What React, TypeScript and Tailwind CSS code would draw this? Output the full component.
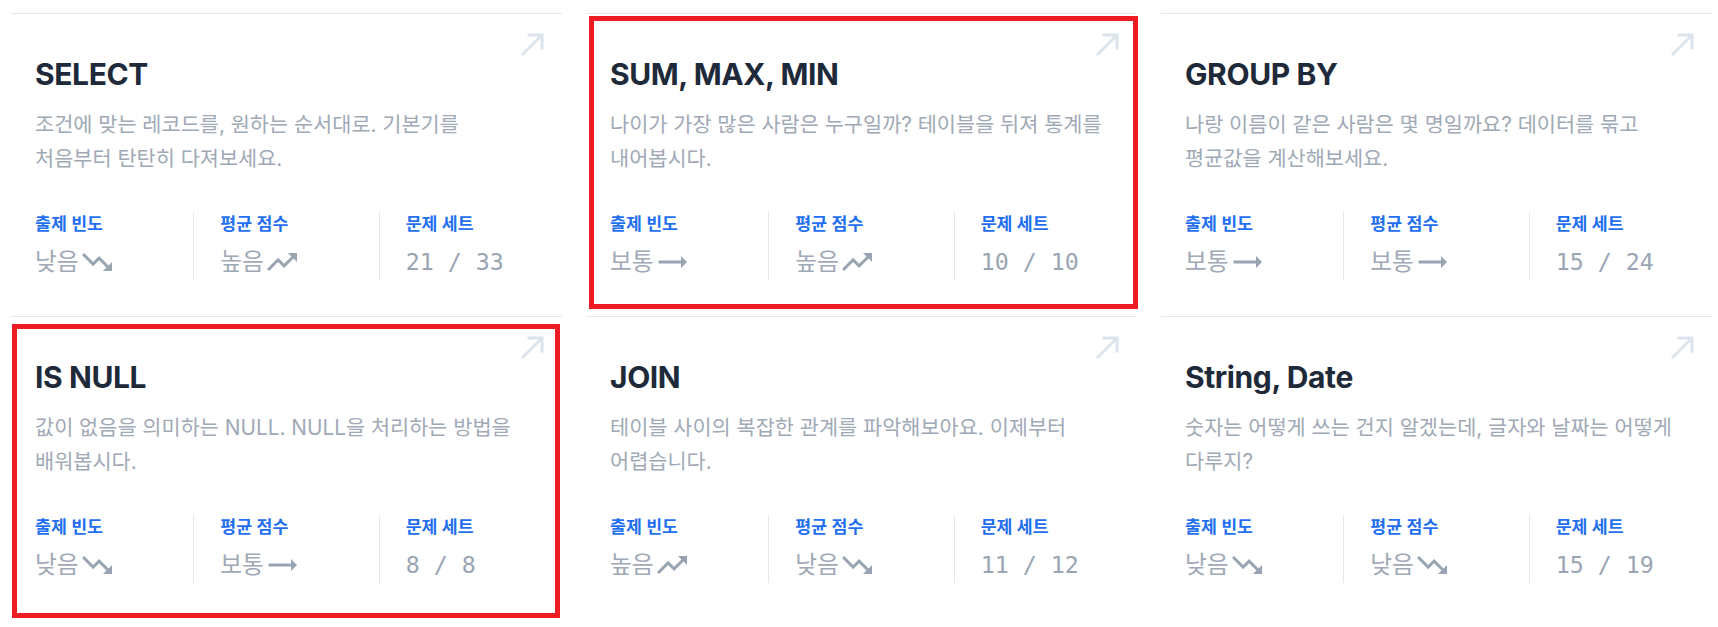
import React from 'react';
import { MdTrendingDown, MdTrendingFlat, MdTrendingUp } from 'react-icons/md';

type Level = '낮음' | '보통' | '높음';

interface Topic {
  title: string;
  lines: string[];
  freq: Level;
  score: Level;
  done: number;
  total: number;
  marked?: 'a' | 'b';
}

const topics: Topic[] = [
  { title: 'SELECT', lines: ['조건에 맞는 레코드를, 원하는 순서대로. 기본기를', '처음부터 탄탄히 다져보세요.'], freq: '낮음', score: '높음', done: 21, total: 33 },
  { title: 'SUM, MAX, MIN', lines: ['나이가 가장 많은 사람은 누구일까? 테이블을 뒤져 통계를', '내어봅시다.'], freq: '보통', score: '높음', done: 10, total: 10, marked: 'a' },
  { title: 'GROUP BY', lines: ['나랑 이름이 같은 사람은 몇 명일까요? 데이터를 묶고', '평균값을 계산해보세요.'], freq: '보통', score: '보통', done: 15, total: 24 },
  { title: 'IS NULL', lines: ['값이 없음을 의미하는 NULL. NULL을 처리하는 방법을', '배워봅시다.'], freq: '낮음', score: '보통', done: 8, total: 8, marked: 'b' },
  { title: 'JOIN', lines: ['테이블 사이의 복잡한 관계를 파악해보아요. 이제부터', '어렵습니다.'], freq: '높음', score: '낮음', done: 11, total: 12 },
  { title: 'String, Date', lines: ['숫자는 어떻게 쓰는 건지 알겠는데, 글자와 날짜는 어떻게', '다루지?'], freq: '낮음', score: '낮음', done: 15, total: 19 },
];

const Trend: React.FC<{ level: Level }> = ({ level }) => {
  const cls = 'shrink-0 text-[#98a4b2]';
  if (level === '높음') return <MdTrendingUp size={36} className={cls} />;
  if (level === '낮음') return <MdTrendingDown size={36} className={cls} />;
  return <MdTrendingFlat size={36} className={cls} />;
};

const OutArrow = () => (
  <svg width="24" height="24" viewBox="0 0 24 24" fill="none" stroke="#dbe4ed" strokeWidth="3" className="absolute top-[19px] right-[18px]">
    <path d="M2 22 L22 2" />
    <path d="M7.5 2 H22 V16.5" />
  </svg>
);

const Label: React.FC<{ children: React.ReactNode }> = ({ children }) => (
  <div className="text-[17.3px] leading-6 font-semibold text-[#1f6ff0]">{children}</div>
);

const TopicCard: React.FC<{ t: Topic }> = ({ t }) => (
  <div className="relative border-t border-slate-200 px-6 pt-[42px] pb-9">
    <OutArrow />
    {t.marked === 'a' && (
      <div className="pointer-events-none absolute left-[3px] top-[2px] w-[549px] h-[293px] border-[5px] border-[#ee1c25]" />
    )}
    {t.marked === 'b' && (
      <div className="pointer-events-none absolute left-[1px] top-[7px] w-[548px] h-[294px] border-[5px] border-[#ee1c25]" />
    )}

    <h3 className="text-[30px] leading-9 font-bold tracking-[-0.4px] text-[#1e2a3a]">{t.title}</h3>

    <div className="mt-4 text-[20.8px] leading-[33.5px] text-[#a0a9b6]">
      {t.lines.map(l => (
        <div key={l} className="whitespace-nowrap">{l}</div>
      ))}
    </div>

    <div className="mt-[37px] flex">
      <div className="flex-1 min-w-0 pr-[26px]">
        <Label>출제 빈도</Label>
        <div className="mt-2 h-9 flex items-center text-[23.7px] text-[#a0a9b6]">
          {t.freq}
          <Trend level={t.freq} />
        </div>
      </div>
      <div className="flex-1 min-w-0 border-l border-slate-200 px-[26px]">
        <Label>평균 점수</Label>
        <div className="mt-2 h-9 flex items-center text-[23.7px] text-[#a0a9b6]">
          {t.score}
          <Trend level={t.score} />
        </div>
      </div>
      <div className="flex-1 min-w-0 border-l border-slate-200 pl-[26px]">
        <Label>문제 세트</Label>
        <div className="mt-2 h-9 flex items-center whitespace-pre font-['DejaVu_Sans_Mono',monospace] text-[23.3px] text-[#9aa5b3]">
          {`${t.done} / ${t.total}`}
        </div>
      </div>
    </div>
  </div>
);

export default function App() {
  return (
    <div className="min-h-screen bg-white pt-[13px] pl-[11px] font-[Inter,'Noto_Sans_CJK_KR',sans-serif]">
      <div className="grid grid-cols-[551px_551px_551px] gap-x-6">
        {topics.map(t => (
          <TopicCard key={t.title} t={t} />
        ))}
      </div>
    </div>
  );
}
